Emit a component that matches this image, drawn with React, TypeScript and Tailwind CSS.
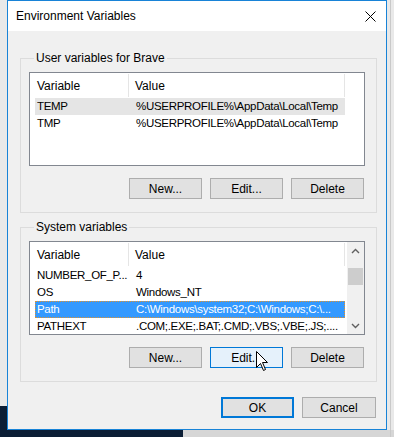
import type { ReactNode } from "react";

/* =========================
   DATA
========================= */
const userVars = [
  { name: "TEMP", value: "%USERPROFILE%\\AppData\\Local\\Temp", state: "inactive" },
  { name: "TMP", value: "%USERPROFILE%\\AppData\\Local\\Temp", state: "" },
];

const systemVars = [
  { name: "NUMBER_OF_P...", value: "4", state: "" },
  { name: "OS", value: "Windows_NT", state: "" },
  { name: "Path", value: "C:\\Windows\\system32;C:\\Windows;C:\\...", state: "active" },
  { name: "PATHEXT", value: ".COM;.EXE;.BAT;.CMD;.VBS;.VBE;.JS;....", state: "" },
];

const font = "font-['Segoe_UI','Liberation_Sans',Arial,sans-serif] text-[12px]";

/* =========================
   PIECES
========================= */
function WinButton({
  children,
  variant = "normal",
  className = "",
}: {
  children: ReactNode;
  variant?: "normal" | "hover" | "default";
  className?: string;
}) {
  const look =
    variant === "hover"
      ? "border border-[#0078d7] bg-[#e5f1fb]"
      : variant === "default"
      ? "border-2 border-[#0078d7] bg-[#e1e1e1]"
      : "border border-[#adadad] bg-[#e1e1e1]";
  return (
    <div
      className={`h-[21px] flex items-center justify-center text-black ${look} ${className}`}
    >
      {children}
    </div>
  );
}

function Row({ name, value, state }: { name: string; value: string; state: string }) {
  const bg =
    state === "active"
      ? "bg-[#3399ff] text-white outline outline-1 outline-dotted outline-[#e0922e] -outline-offset-1"
      : state === "inactive"
      ? "bg-[#e5e5e5] text-black"
      : "text-black";
  return (
    <div
      className={`ml-[5px] w-[310px] h-[17px] flex items-center whitespace-nowrap text-[11.5px] tracking-[-0.3px] ${bg}`}
    >
      <span className="w-[99px] pl-[2px] shrink-0">{name}</span>
      <span className="pl-[2px]">{value}</span>
    </div>
  );
}

function Header() {
  return (
    <div className="h-[25px] flex items-center shrink-0">
      <div className="w-[99px] pl-[7px] h-[23px] flex items-center border-r border-[#e5e5e5] shrink-0">
        Variable
      </div>
      <div className="w-[216px] pl-[6px] h-[23px] flex items-center border-r border-[#e5e5e5]">
        Value
      </div>
    </div>
  );
}

function ScrollBar() {
  return (
    <div className="w-[17px] flex flex-col bg-[#f0f0f0] shrink-0">
      <div className="h-[17px] flex items-center justify-center">
        <svg width="9" height="6" viewBox="0 0 9 6">
          <path d="M1 5 L4.5 1.5 L8 5" fill="none" stroke="#606060" strokeWidth="1.4" />
        </svg>
      </div>
      <div className="h-[9px]" />
      <div className="h-[17px] mx-[1px] bg-[#cdcdcd]" />
      <div className="flex-1" />
      <div className="h-[17px] flex items-center justify-center">
        <svg width="9" height="6" viewBox="0 0 9 6">
          <path d="M1 1 L4.5 4.5 L8 1" fill="none" stroke="#606060" strokeWidth="1.4" />
        </svg>
      </div>
    </div>
  );
}

function GroupBox({ label, children }: { label: string; children: ReactNode }) {
  return (
    <fieldset className="w-[357px] border border-[#dcdcdc] pl-[8px] pr-[11px] pb-[13px]">
      <legend className="ml-[5px] px-[2px] leading-[16px] text-black">{label}</legend>
      {children}
    </fieldset>
  );
}

function Cursor() {
  return (
    <svg
      className="absolute left-[256px] top-[351px] pointer-events-none"
      width="13"
      height="21"
      viewBox="0 0 13 21"
    >
      <path
        d="M0.5 0.5 L0.5 16.5 L4.5 12.5 L7.5 19.5 L9.5 18.5 L6.5 11.5 L11.5 11.5 Z"
        fill="#fff"
        stroke="#000"
        strokeWidth="1"
        strokeLinejoin="miter"
      />
    </svg>
  );
}

/* =========================
   PAGE
========================= */
export default function App() {
  return (
    <div className={`relative w-[394px] h-[437px] overflow-hidden bg-[#e9e9e9] ${font}`}>
      {/* DESKTOP BEHIND */}
      <div className="absolute left-0 top-[406px] w-[183px] h-[31px] bg-[#0b1e35]" />
      <div className="absolute left-[183px] top-[430px] w-[211px] h-[7px] bg-[#d6d6d6]" />
      <div className="absolute left-[390px] top-0 w-[1px] h-[437px] bg-[#c9c9c9]" />

      {/* WINDOW */}
      <div className="absolute left-[7px] top-0 w-[380px] h-[430px] border border-[#1883d7] bg-[#f0f0f0] flex flex-col">
        {/* TITLE BAR */}
        <div className="h-[30px] bg-white flex items-center justify-between pl-[8px] pr-[10px] shrink-0">
          <span className="text-black">Environment Variables</span>
          <svg width="11" height="11" viewBox="0 0 11 11">
            <path d="M0.5 0.5 L10.5 10.5 M10.5 0.5 L0.5 10.5" stroke="#000" strokeWidth="1" />
          </svg>
        </div>

        <div className="flex flex-col pl-[12px] pt-[19px]">
          {/* USER VARIABLES */}
          <GroupBox label="User variables for Brave">
            <div className="mt-[6px] w-[336px] h-[94px] border border-[#828790] bg-white flex flex-col">
              <Header />
              {userVars.map((v) => (
                <Row key={v.name} {...v} />
              ))}
            </div>
            <div className="mt-[12px] flex justify-end gap-[8px] pr-[1px]">
              <WinButton className="w-[73px]">New...</WinButton>
              <WinButton className="w-[73px]">Edit...</WinButton>
              <WinButton className="w-[73px]">Delete</WinButton>
            </div>
          </GroupBox>

          {/* SYSTEM VARIABLES */}
          <div className="mt-[6px]">
            <GroupBox label="System variables">
              <div className="mt-[6px] w-[336px] h-[94px] border border-[#828790] bg-white flex overflow-hidden">
                <div className="flex-1 flex flex-col">
                  <Header />
                  {systemVars.map((v) => (
                    <Row key={v.name} {...v} />
                  ))}
                </div>
                <ScrollBar />
              </div>
              <div className="mt-[12px] flex justify-end gap-[8px] pr-[1px]">
                <WinButton className="w-[73px]">New...</WinButton>
                <WinButton className="w-[73px]" variant="hover">Edit...</WinButton>
                <WinButton className="w-[73px]">Delete</WinButton>
              </div>
            </GroupBox>
          </div>

          {/* DIALOG BUTTONS */}
          <div className="mt-[15px] w-[356px] flex justify-end gap-[8px]">
            <WinButton className="w-[73px]" variant="default">OK</WinButton>
            <WinButton className="w-[74px]">Cancel</WinButton>
          </div>
        </div>
      </div>

      <Cursor />
    </div>
  );
}
